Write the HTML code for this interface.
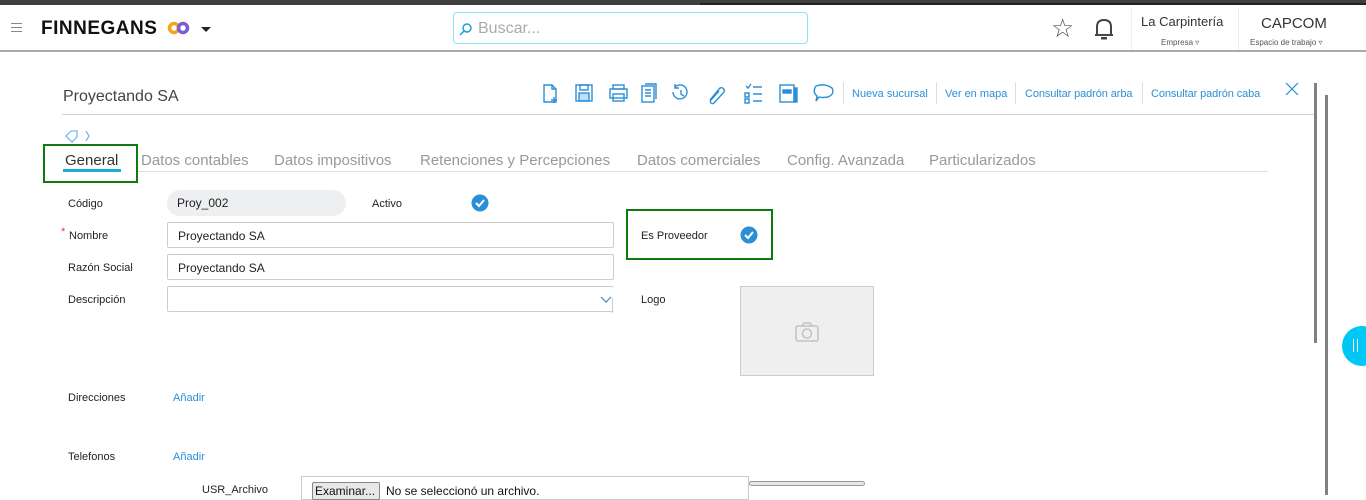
<!DOCTYPE html>
<html><head><meta charset="utf-8"><style>
*{margin:0;padding:0;box-sizing:border-box}
body{width:1366px;height:495px;overflow:hidden;background:#fff;font-family:"Liberation Sans",sans-serif;position:relative;color:#333}
.a{position:absolute}
.lbl{font-size:11px;color:#222}
.inp{position:absolute;height:26px;border:1px solid #ccc;border-radius:2px;font-size:12px;padding:6px 10px;color:#222}
.tab{position:absolute;top:152px;font-size:15px;color:#999}
.lnk{position:absolute;top:88px;font-size:11px;color:#2b8fd6}
.sep{position:absolute;top:82px;width:1px;height:22px;background:#ddd}
</style></head><body>
<div class="a" style="left:0;top:0;width:1366px;height:5px;background:#3f3f3f"></div>
<div class="a" style="left:700px;top:3px;width:666px;height:2px;background:#222"></div>
<div class="a" style="left:0;top:50px;width:1366px;height:2px;background:#aaa"></div>
<div class="a" style="left:11px;top:23px;width:11px;height:1px;background:#888;box-shadow:0 4px 0 #888,0 8px 0 #888"></div>
<div class="a" style="left:41px;top:18px;font-size:19px;font-weight:bold;color:#111;letter-spacing:0.5px">FINNEGANS</div>
<svg class="a" style="left:167px;top:21px" width="24" height="14"><circle cx="7" cy="7" r="4.5" fill="none" stroke="#f7a21b" stroke-width="3.5"/><circle cx="16" cy="7" r="4.5" fill="none" stroke="#7a5cd6" stroke-width="3.5"/></svg>
<div class="a" style="left:201px;top:27px;border-left:5px solid transparent;border-right:5px solid transparent;border-top:5px solid #222"></div>
<div class="a" style="left:453px;top:12px;width:355px;height:32px;border:1px solid #8ee3f5;border-radius:4px"></div>
<svg class="a" style="left:459px;top:22px" width="14" height="14"><circle cx="8" cy="6" r="4" fill="none" stroke="#1aa3d9" stroke-width="1.5"/><line x1="5" y1="9" x2="1" y2="13" stroke="#1aa3d9" stroke-width="1.5"/></svg>
<div class="a" style="left:478px;top:20px;font-size:16px;color:#aaa">Buscar...</div>
<div class="a" style="left:1051px;top:13px;font-size:26px;color:#555;line-height:30px">☆</div>
<svg class="a" style="left:1093px;top:16px" width="22" height="26"><path d="M4 19 L4 11 Q4 4 11 4 Q18 4 18 11 L18 19 Z M2 19 L20 19" fill="none" stroke="#444" stroke-width="2"/><rect x="8" y="21" width="6" height="2.5" fill="#444"/></svg>
<div class="a" style="left:1131px;top:8px;width:1px;height:42px;background:#eee"></div>
<div class="a" style="left:1238px;top:8px;width:1px;height:42px;background:#eee"></div>
<div class="a" style="left:1141px;top:14px;font-size:13px;color:#333">La Carpintería</div>
<div class="a" style="left:1161px;top:38px;font-size:8px;color:#555">Empresa ▿</div>
<div class="a" style="left:1261px;top:15px;font-size:15px;color:#333">CAPCOM</div>
<div class="a" style="left:1250px;top:38px;font-size:8px;color:#555">Espacio de trabajo ▿</div>

<div class="a" style="left:63px;top:88px;font-size:16px;color:#444">Proyectando SA</div>
<svg class="a" style="left:540px;top:82px" width="300" height="24" fill="none" stroke="#2b8fd6" stroke-width="1.4">
<path d="M4 3 H12 L16 7 V20 H4 Z M12 3 V7 H16 M14 15 V21 M11 18 H17"/>
<rect x="36" y="3" width="16" height="16"/><rect x="40" y="3" width="8" height="5"/><rect x="39" y="11" width="10" height="8" fill="#2b8fd6" fill-opacity=".3"/>
<rect x="70" y="7" width="17" height="9"/><rect x="73" y="3" width="11" height="4"/><rect x="73" y="12" width="11" height="7"/>
<rect x="102" y="4" width="12" height="16"/><path d="M105 2 H116 V17 M105 8 H111 M105 11 H111 M105 14 H111"/>
<path d="M135 5 A7 7 0 1 1 133 10 M135 2 V6 H139 M141 8 V12 L144 14"/>
<path d="M170 18 L180 6 A3 3 0 0 1 184 10 L174 21 A2 2 0 0 1 171 18 L179 9"/>
<path d="M206 4 L208 6 L211 2 M205 11 H209 V15 H205 Z M205 17 H209 V21 H205 Z M213 5 H222 M213 12 H222 M213 19 H222"/>
<rect x="240" y="3" width="14" height="17"/><rect x="254" y="6" width="3" height="14" fill="#2b8fd6"/><rect x="243" y="8" width="8" height="3" fill="#2b8fd6"/>
<path d="M276 4 Q285 1 292 6 Q295 12 288 15 Q282 16 279 15 L276 19 L277 14 Q272 10 276 4 Z"/>
</svg>
<div class="sep" style="left:843px"></div>
<div class="lnk" style="left:852px">Nueva sucursal</div>
<div class="sep" style="left:936px"></div>
<div class="lnk" style="left:945px">Ver en mapa</div>
<div class="sep" style="left:1015px"></div>
<div class="lnk" style="left:1025px;letter-spacing:-0.1px">Consultar padrón arba</div>
<div class="sep" style="left:1142px"></div>
<div class="lnk" style="left:1151px;letter-spacing:-0.1px">Consultar padrón caba</div>
<svg class="a" style="left:1285px;top:82px" width="14" height="14" stroke="#2b8fd6" stroke-width="1.2"><line x1="1" y1="1" x2="13" y2="13"/><line x1="13" y1="1" x2="1" y2="13"/></svg>
<div class="a" style="left:62px;top:114px;width:1252px;height:1px;background:#d0d0d0"></div>
<div class="a" style="left:1314px;top:83px;width:3px;height:260px;background:#808080"></div>
<div class="a" style="left:1325px;top:95px;width:3px;height:400px;background:#808080"></div>
<div class="a" style="left:1342px;top:326px;width:40px;height:40px;border-radius:20px;background:#00c8f5"></div>
<div class="a" style="left:1353px;top:339px;width:5px;height:13px;border-left:1.5px solid #fff;border-right:1.5px solid #fff"></div>

<svg class="a" style="left:64px;top:129px" width="30" height="14" fill="none" stroke="#5aaef0" stroke-width="1.1"><path d="M2 7 L7 2 H13 V8 L8 13 Z"/><path d="M22 2 L25 7 L22 12"/></svg>
<div class="a" style="left:43px;top:144px;width:95px;height:39px;border:2px solid #0f7a0f"></div>
<div class="tab" style="left:65px;color:#333">General</div>
<div class="a" style="left:63px;top:169px;width:58px;height:3px;background:#1ab0d6"></div>
<div class="a" style="left:138px;top:171px;width:1130px;height:1px;background:#ddd"></div>
<div class="tab" style="left:141px">Datos contables</div>
<div class="tab" style="left:274px">Datos impositivos</div>
<div class="tab" style="left:420px">Retenciones y Percepciones</div>
<div class="tab" style="left:637px">Datos comerciales</div>
<div class="tab" style="left:787px">Config. Avanzada</div>
<div class="tab" style="left:929px">Particularizados</div>

<div class="a lbl" style="left:68px;top:198px">Código</div>
<div class="inp" style="left:167px;top:190px;width:179px;border:none;background:#eeeff1;border-radius:13px">Proy_002</div>
<div class="a lbl" style="left:372px;top:198px">Activo</div>
<svg class="a" style="left:471px;top:194px" width="18" height="18"><circle cx="9" cy="9" r="8.5" fill="#2b8fd6"/><path d="M5 9 L8 12 L13 6" stroke="#fff" stroke-width="2" fill="none"/></svg>
<div class="a" style="left:626px;top:209px;width:147px;height:51px;border:2px solid #0f7a0f"></div>
<div class="a lbl" style="left:641px;top:230px">Es Proveedor</div>
<svg class="a" style="left:740px;top:226px" width="18" height="18"><circle cx="9" cy="9" r="8.5" fill="#2b8fd6"/><path d="M5 9 L8 12 L13 6" stroke="#fff" stroke-width="2" fill="none"/></svg>
<div class="a" style="left:61px;top:226px;color:#e33;font-size:11px">*</div>
<div class="a lbl" style="left:69px;top:230px">Nombre</div>
<div class="inp" style="left:167px;top:222px;width:447px">Proyectando SA</div>
<div class="a lbl" style="left:68px;top:262px">Razón Social</div>
<div class="inp" style="left:167px;top:254px;width:447px">Proyectando SA</div>
<div class="a lbl" style="left:68px;top:294px">Descripción</div>
<div class="inp" style="left:167px;top:286px;width:447px;border-right:none"></div>
<svg class="a" style="left:600px;top:296px" width="12" height="8" fill="none" stroke="#2b8fd6" stroke-width="1.2"><path d="M1 1 L6 6 L11 1"/></svg>
<div class="a" style="left:612px;top:298px;width:1px;height:15px;background:#ccc"></div>
<div class="a lbl" style="left:641px;top:294px">Logo</div>
<div class="a" style="left:740px;top:286px;width:134px;height:90px;background:#efefef;border:1px solid #ccc"></div>
<svg class="a" style="left:794px;top:321px" width="26" height="22" fill="none" stroke="#c4c4c4" stroke-width="1.6"><rect x="2" y="5" width="22" height="15" rx="2"/><circle cx="13" cy="12.5" r="4.5"/><path d="M8 5 L10 2 H16 L18 5"/></svg>
<div class="a lbl" style="left:68px;top:392px">Direcciones</div>
<div class="a" style="left:173px;top:392px;font-size:11px;color:#2b8fd6">Añadir</div>
<div class="a lbl" style="left:68px;top:451px">Telefonos</div>
<div class="a" style="left:173px;top:451px;font-size:11px;color:#2b8fd6">Añadir</div>
<div class="a lbl" style="left:202px;top:484px">USR_Archivo</div>
<div class="a" style="left:301px;top:476px;width:448px;height:24px;border:1px solid #ccc"></div>
<div class="a" style="left:312px;top:482px;width:68px;height:18px;border:1px solid #888;background:#e8e8e8;border-radius:2px;font-size:12px;padding:1px 2px;color:#111">Examinar...</div>
<div class="a" style="left:386px;top:484px;font-size:12px;color:#111">No se seleccionó un archivo.</div>
<div class="a" style="left:749px;top:481px;width:116px;height:5px;border:1px solid #999;border-radius:3px;background:#e8e8e8"></div>
</body></html>
